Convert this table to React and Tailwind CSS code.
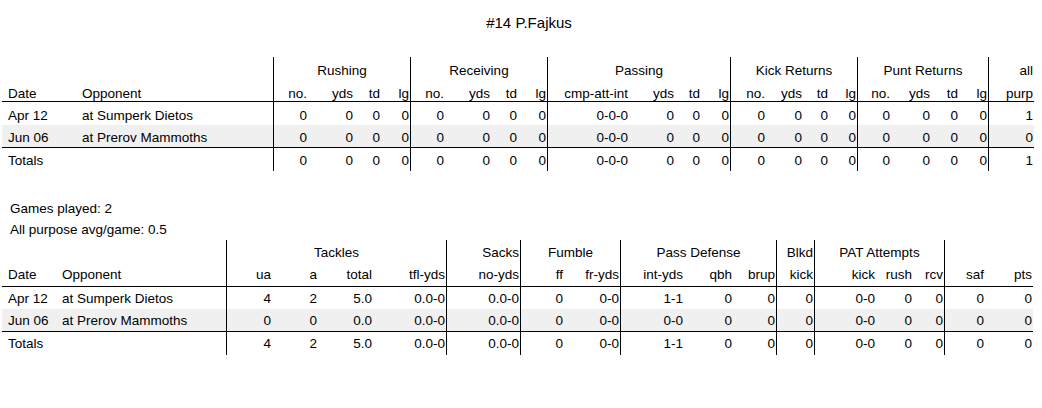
import React from "react";

const T1 =
  "grid grid-cols-[80px_192px_34px_46px_27px_30px_34px_46px_27px_30px_81px_46px_26px_30px_35px_37px_26px_29px_33px_40px_28px_30px_45px]";
const T1B = [1, 5, 9, 13, 17, 21];

const T2 =
  "grid grid-cols-[60px_165px_45px_46px_55px_74px_74px_43px_57px_63px_49px_44px_38px_61px_37px_32px_40px_48px]";
const T2B = [1, 5, 6, 8, 11, 12, 15];

function Row({ tpl, borders, cells, rowCls, pad, datePl }) {
  return (
    <div className={tpl + " " + rowCls}>
      {cells.map((c, i) => {
        let cls = "whitespace-nowrap leading-[19px] " + pad;
        if (i === 0) cls += " text-left " + datePl;
        else if (i === 1) cls += " text-left";
        else cls += " text-right pr-[1px]";
        if (borders.includes(i)) cls += " border-r border-black";
        return (
          <div key={i} className={cls}>
            {c}
          </div>
        );
      })}
    </div>
  );
}

function GroupRow({ tpl, groups, rowCls, pad }) {
  return (
    <div className={tpl + " " + rowCls}>
      {groups.map((g, i) => (
        <div
          key={i}
          className={
            "whitespace-nowrap leading-[19px] " +
            pad +
            " " +
            g.span +
            " " +
            g.align +
            (g.border ? " border-r border-black" : "")
          }
        >
          {g.label}
        </div>
      ))}
    </div>
  );
}

const t1Groups = [
  { label: "", span: "col-span-2", align: "text-left", border: true },
  { label: "Rushing", span: "col-span-4", align: "text-center", border: true },
  { label: "Receiving", span: "col-span-4", align: "text-center", border: true },
  { label: "Passing", span: "col-span-4", align: "text-center", border: true },
  { label: "Kick Returns", span: "col-span-4", align: "text-center", border: true },
  { label: "Punt Returns", span: "col-span-4", align: "text-center", border: true },
  { label: "all", span: "col-span-1", align: "text-right pr-[1px]", border: false },
];

const t1Head = [
  "Date", "Opponent",
  "no.", "yds", "td", "lg",
  "no.", "yds", "td", "lg",
  "cmp-att-int", "yds", "td", "lg",
  "no.", "yds", "td", "lg",
  "no.", "yds", "td", "lg",
  "purp",
];

const z4 = ["0", "0", "0", "0"];
const t1Rows = [
  ["Apr 12", "at Sumperk Dietos", ...z4, ...z4, "0-0-0", "0", "0", "0", ...z4, ...z4, "1"],
  ["Jun 06", "at Prerov Mammoths", ...z4, ...z4, "0-0-0", "0", "0", "0", ...z4, ...z4, "0"],
  ["Totals", "", ...z4, ...z4, "0-0-0", "0", "0", "0", ...z4, ...z4, "1"],
];

const t2Groups = [
  { label: "", span: "col-span-2", align: "text-left", border: true },
  { label: "Tackles", span: "col-span-4", align: "text-center", border: true },
  { label: "Sacks", span: "col-span-1", align: "text-right pr-[1px]", border: true },
  { label: "Fumble", span: "col-span-2", align: "text-center", border: true },
  { label: "Pass Defense", span: "col-span-3", align: "text-center", border: true },
  { label: "Blkd", span: "col-span-1", align: "text-right pr-[1px]", border: true },
  { label: "PAT Attempts", span: "col-span-3", align: "text-center", border: true },
  { label: "", span: "col-span-2", align: "text-left", border: false },
];

const t2Head = [
  "Date", "Opponent",
  "ua", "a", "total", "tfl-yds",
  "no-yds",
  "ff", "fr-yds",
  "int-yds", "qbh", "brup",
  "kick",
  "kick", "rush", "rcv",
  "saf", "pts",
];

const t2Rows = [
  ["Apr 12", "at Sumperk Dietos", "4", "2", "5.0", "0.0-0", "0.0-0", "0", "0-0", "1-1", "0", "0", "0", "0-0", "0", "0", "0", "0"],
  ["Jun 06", "at Prerov Mammoths", "0", "0", "0.0", "0.0-0", "0.0-0", "0", "0-0", "0-0", "0", "0", "0", "0-0", "0", "0", "0", "0"],
  ["Totals", "", "4", "2", "5.0", "0.0-0", "0.0-0", "0", "0-0", "1-1", "0", "0", "0", "0-0", "0", "0", "0", "0"],
];

export default function App() {
  return (
    <div className="w-[1042px] h-[408px] bg-white text-black font-['Liberation_Sans',Arial,sans-serif] text-[13.5px] overflow-hidden">
      <div className="flex justify-center pl-[16px] pt-[13px] text-[15px] leading-[20px]">
        #14 P.Fajkus
      </div>

      <div className="ml-[2px] w-[1032px] mt-[24px]">
        <GroupRow tpl={T1} groups={t1Groups} rowCls="h-[23px]" pad="pt-[4px]" />
        <Row tpl={T1} borders={T1B} cells={t1Head} rowCls="h-[22px] border-b border-black" pad="pt-[4px]" datePl="pl-[6px]" />
        <Row tpl={T1} borders={T1B} cells={t1Rows[0]} rowCls="h-[23px]" pad="pt-[4px]" datePl="pl-[6px]" />
        <Row tpl={T1} borders={T1B} cells={t1Rows[1]} rowCls="h-[23px] bg-[#f0f0f0] border-b border-black" pad="pt-[3px]" datePl="pl-[6px]" />
        <Row tpl={T1} borders={T1B} cells={t1Rows[2]} rowCls="h-[23px]" pad="pt-[3px]" datePl="pl-[6px]" />
      </div>

      <div className="mt-[27px] pl-[10px] leading-[21px]">
        <div>Games played: 2</div>
        <div>All purpose avg/game: 0.5</div>
      </div>

      <div className="ml-[2px] w-[1031px]">
        <GroupRow tpl={T2} groups={t2Groups} rowCls="h-[23px]" pad="pt-[3px]" />
        <Row tpl={T2} borders={T2B} cells={t2Head} rowCls="h-[24px] border-b border-black" pad="pt-[2px]" datePl="pl-[6px]" />
        <Row tpl={T2} borders={T2B} cells={t2Rows[0]} rowCls="h-[22px]" pad="pt-[2px]" datePl="pl-[6px]" />
        <Row tpl={T2} borders={T2B} cells={t2Rows[1]} rowCls="h-[23px] bg-[#f0f0f0] border-b border-black" pad="pt-[2px]" datePl="pl-[6px]" />
        <Row tpl={T2} borders={T2B} cells={t2Rows[2]} rowCls="h-[23px]" pad="pt-[2px]" datePl="pl-[6px]" />
      </div>
    </div>
  );
}
